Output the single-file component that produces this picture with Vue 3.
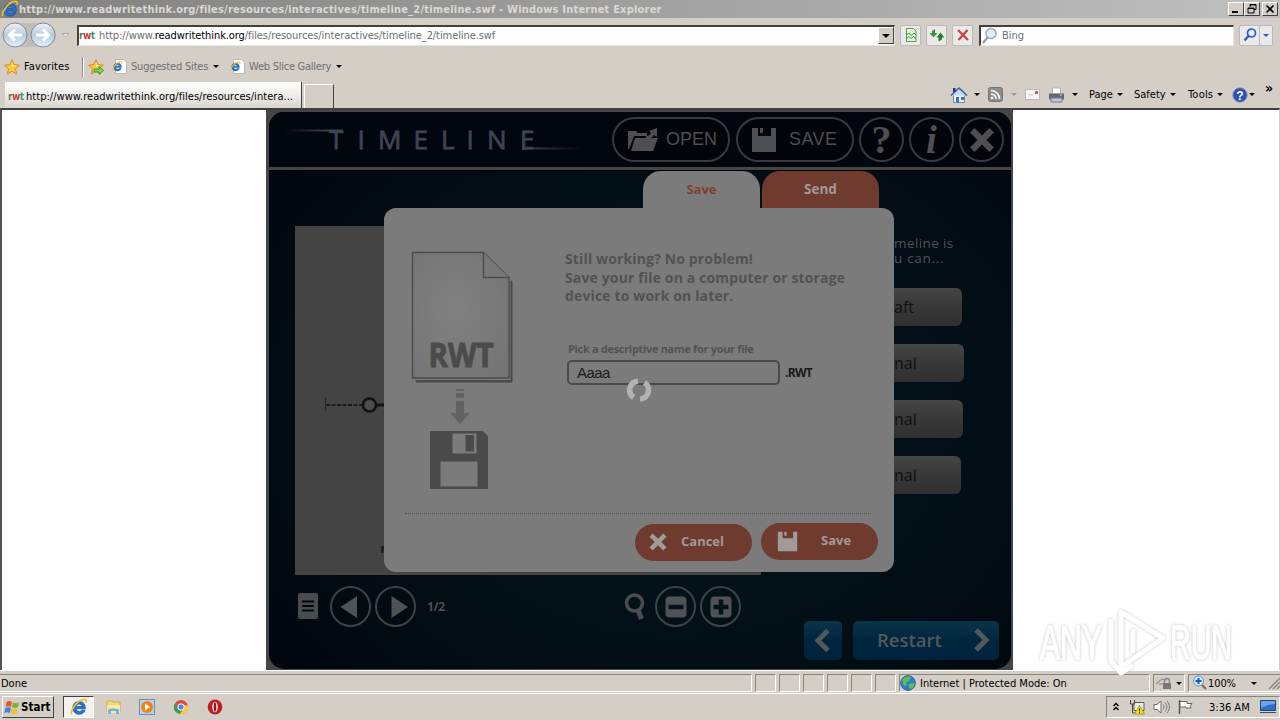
<template>
  <div class="screen">
    <svg class="sprite" aria-hidden="true">
      <symbol id="ie" viewBox="0 0 16 16">
        <path d="M13.6 9.6H5.4c.2 1.6 1.4 2.4 2.9 2.4 1.1 0 1.9-.4 2.4-1.2h2.7c-.8 2.3-2.8 3.6-5.2 3.6-3.400 0-5.700-2.300-5.700-5.700S4.900 3 8.200 3s5.600 2.400 5.400 6.600zM5.500 7.500h5.100C10.400 6.200 9.400 5.400 8.100 5.400S5.800 6.200 5.500 7.500z" fill="#2476d2" stroke="#0d4696" stroke-width=".6" />
        <path d="M1.500 14.600C-.2 11.500 5.500 3.200 11 1.400c3-.9 4.200.5 3.100 3" fill="none" stroke="#f0bf2d" stroke-width="1.500" />
      </symbol>
      <symbol id="star" viewBox="0 0 16 16">
        <path d="M8 .8l2.200 4.800 5.200.6-3.900 3.500 1.100 5.200L8 12.300l-4.600 2.600 1.100-5.200L.6 6.200l5.200-.6z" fill="#fdc741" stroke="#d98a16" stroke-width="1" />
        <path d="M8 3l1.300 3.300 3 .4L8 8z" fill="#fff0a8" />
      </symbol>
      <symbol id="floppy" viewBox="0 0 26 26">
        <path d="M1 1h6v8h13V1h5v24H1zM9 1h3v5H9z" />
      </symbol>
      <symbol id="cross" viewBox="0 0 26 26">
        <path d="M4 4l18 18M22 4L4 22" fill="none" stroke="currentColor" stroke-width="6" />
      </symbol>
    </svg>

    <header class="titlebar">
      <svg class="i18"><use href="#ie" /></svg>
      <span class="title">http://www.readwritethink.org/files/resources/interactives/timeline_2/timeline.swf - Windows Internet Explorer</span>
      <div class="winbtns">
        <button><svg width="14" height="12"><path d="M3 9h6" stroke="#000" stroke-width="2" /></svg></button>
        <button><svg width="14" height="12"><path d="M5 4V1.500h6v5H9M5 2h6M3 5h6v5H3zM3 5.500h6" fill="none" stroke="#000" /></svg></button>
        <button class="close"><svg width="14" height="12"><path d="M3.500 2.500l7 7M10.500 2.500l-7 7" stroke="#000" stroke-width="1.700" /></svg></button>
      </div>
    </header>

    <div class="address-row">
      <svg class="navbtns" width="76" height="30">
        <defs>
          <linearGradient id="nb" x1="0" y1="0" x2="0" y2="1">
            <stop offset="0" stop-color="#eef3f8" /><stop offset=".5" stop-color="#b9cbdd" /><stop offset="1" stop-color="#e4f2fb" />
          </linearGradient>
        </defs>
        <path d="M15 3h29a12 12 0 0 1 0 24H15a12 12 0 0 1 0-24z" fill="#b6b2ac" opacity=".6" />
        <circle cx="15" cy="15" r="12" fill="url(#nb)" stroke="#7c8ca0" />
        <circle cx="43" cy="15" r="12" fill="url(#nb)" stroke="#7c8ca0" />
        <path d="M22 15H10M15 9.500L9.500 15l5.500 5.500M36 15h12M43 9.500l5.500 5.500-5.500 5.500" fill="none" stroke="#fff" stroke-width="3" />
        <path d="M62 13.500h7l-3.500 4z" fill="#e8e5e0" stroke="#aaa6a0" />
      </svg>
      <div class="field url">
        <span class="rwt"><b>r</b><i>w</i><u>t</u></span>
        <span class="url-text">http://www.<em>readwritethink.org</em>/files/resources/interactives/timeline_2/timeline.swf</span>
        <button class="drop"><span class="caret"></span></button>
      </div>
      <div class="flatbtns">
        <button><svg width="16" height="16"><path d="M3.500 1.500h7l2.500 2.500v10.500h-9.500z" fill="#e4f5df" stroke="#55a050" /><path d="M3.500 8l2.500-2 2 2.500L11 6l2 2M3.500 11.500l2.500-2 2 2 2.500-2 2.500 2" fill="none" stroke="#3f9a3c" /></svg></button>
        <button><svg width="16" height="16"><path d="M6 2v4h2.500L4.500 10.500.5 6H3V4z" fill="#37963a" /><path d="M9.500 14.500v-4H7.500L11.500 5.500l4 5H13v2z" fill="#2b7f2d" /></svg></button>
        <button><svg width="16" height="16"><path d="M3 3l10 10M12.500 3L3.500 13" fill="none" stroke="#c9423c" stroke-width="2.200" /></svg></button>
      </div>
      <div class="field search">
        <svg width="18" height="18"><circle cx="10" cy="6.500" r="5" fill="#e2eef7" stroke="#98a9b8" stroke-width="1.400" /><path d="M6.500 10.500L2 16" stroke="#8e9aa6" stroke-width="2" /></svg>
        <span>Bing</span>
      </div>
      <div class="flatbtns go">
        <button><svg width="16" height="16"><circle cx="9.500" cy="6" r="4" fill="#e3effc" stroke="#2559cf" stroke-width="1.700" /><path d="M6.500 9L2.500 13.500" stroke="#2559cf" stroke-width="2.200" /></svg></button>
        <button class="narrow"><span class="caret navy"></span></button>
      </div>
    </div>

    <div class="fav-row">
      <svg class="i16"><use href="#star" /></svg>
      <span class="fav">Favorites</span>
      <span class="sep"></span>
      <svg class="i16 addfav" viewBox="0 0 16 16"><use href="#star" /><path d="M6 10h5V7.500l4.500 4-4.500 4V13H6z" fill="#7dd35c" stroke="#2f8f24" stroke-width=".8" /></svg>
      <svg class="i15 page" viewBox="0 0 15 15"><path d="M3.500.5h8l3 3v11h-11z" fill="#fff" stroke="#b9b9b9" /><use href="#ie" x="0" y="2" width="11" height="11" /></svg>
      <span class="dim sug">Suggested Sites</span><span class="caret"></span>
      <svg class="i15 page2" viewBox="0 0 15 15"><path d="M3.500.5h8l3 3v11h-11z" fill="#fff" stroke="#b9b9b9" /><use href="#ie" x="0" y="2" width="11" height="11" /></svg>
      <span class="dim wsg">Web Slice Gallery</span><span class="caret"></span>
    </div>

    <div class="tab-row">
      <div class="tab">
        <span class="rwt"><b>r</b><i>w</i><u>t</u></span>
        <span>http://www.readwritethink.org/files/resources/intera...</span>
      </div>
      <div class="newtab"></div>
      <div class="commands">
        <svg width="18" height="18"><path d="M3.500 8.500h11v8h-11z" fill="#e9eef8" stroke="#7689ae" /><path d="M1 9.500L9 2l8 7.500" fill="#c9d7ef" stroke="#3a58a4" stroke-width="1.500" /><path d="M3 2h2.500v4H3z" fill="#27357d" /><path d="M6 11h3v5.500H6zM11 11h3v3h-3z" fill="#3b74b9" /></svg>
        <span class="caret c1"></span>
        <svg class="rss" width="15" height="15"><rect x=".5" y=".5" width="14" height="14" rx="2" fill="#8d8d8d" stroke="#757575" /><path d="M3 7a5 5 0 0 1 5 5M3 3.500A8.500 8.500 0 0 1 11.500 12" fill="none" stroke="#fff" stroke-width="1.700" /><circle cx="4" cy="11" r="1.300" fill="#fff" /></svg>
        <span class="caret pale c2"></span>
        <svg class="mail" width="15" height="11"><path d="M.5.5h14v10H.5z" fill="#f6f6f6" stroke="#bcb9b5" /><path d="M10 2h3v3h-3z" fill="#d0556c" /><path d="M3 6h5" stroke="#c9c9c9" /></svg>
        <svg class="print" width="17" height="16"><path d="M4.500 1h7l1 1v5h-8z" fill="#fff" stroke="#b7b7b7" /><path d="M1 6.500h15v6H1z" fill="#666b73" /><path d="M3 11h11v4H3z" fill="#b5c9dd" stroke="#737b85" /><path d="M12 8h2" stroke="#cfd4da" /></svg>
        <span class="caret c3"></span>
        <span class="cmd c4">Page</span><span class="caret"></span>
        <span class="cmd c6">Safety</span><span class="caret"></span>
        <span class="cmd c7">Tools</span><span class="caret"></span>
        <svg class="help" width="16" height="16"><circle cx="8" cy="8" r="7.200" fill="#2a52b4" stroke="#8793b5" /><text x="8" y="12.500" text-anchor="middle">?</text></svg>
        <span class="caret c8"></span>
        <span class="more">»</span>
      </div>
    </div>

    <main class="viewport">
      <div class="stage">
        <div class="panel">
          <div class="flash-head">
            <svg class="logo" width="310" height="44">
              <defs>
                <linearGradient id="sl"><stop offset="0" stop-color="#3d4452" stop-opacity="0" /><stop offset=".8" stop-color="#3d4452" /></linearGradient>
                <linearGradient id="sr"><stop offset="0" stop-color="#3d4452" /><stop offset="1" stop-color="#3d4452" stop-opacity="0" /></linearGradient>
              </defs>
              <text y="31" x="51 79.500 100 135.500 163 188.500 209 242">TIMELINE</text>
              <rect x="5" y="11.500" width="60" height="2" fill="url(#sl)" />
              <rect x="244" y="29.500" width="60" height="2" fill="url(#sr)" />
            </svg>
            <button class="pill open">
              <svg width="32" height="26"><path d="M1 4h8l2 2h9v3H7L2 22H1zM8 11h23l-5 13H4z" /><path d="M19 9c2 0 4-1 5-3l-2-2 8-3 0 9-3-2c-2 3-5 4-8 4z" /></svg>
              <span>OPEN</span>
            </button>
            <button class="pill save">
              <svg width="26" height="26"><use href="#floppy" /></svg>
              <span>SAVE</span>
            </button>
            <button class="round q">?</button>
            <button class="round info">i</button>
            <button class="round"><svg width="28" height="28"><use href="#cross" /></svg></button>
          </div>

          <div class="flash-body">
            <div class="left">
              <div class="canvas">
                <svg width="90" height="349">
                  <path d="M30.500 172v13" stroke="#262626" />
                  <path d="M31 179h36" stroke="#1c1c1c" stroke-width="2" stroke-dasharray="4 1.500" />
                  <circle cx="74.500" cy="179" r="6.500" fill="#4c4c4c" stroke="#101114" stroke-width="2.600" />
                  <path d="M81 179h9" stroke="#101114" stroke-width="3" />
                  <text x="85" y="327">r</text>
                </svg>
              </div>
              <div class="controls">
                <svg class="doc" width="20" height="27"><rect width="20" height="26" rx="2.500" fill="#494c4e" /><path d="M4 8.500h12M4 13h12M4 17.500h12" stroke="#03080f" stroke-width="2" /></svg>
                <button class="ctl"><svg width="38" height="38"><path d="M8.500 19L25 8v22z" /></svg></button>
                <button class="ctl"><svg width="38" height="38"><path d="M31 19L14.500 8v22z" /></svg></button>
                <span class="count">1/2</span>
                <svg class="lens" width="22" height="30"><circle cx="10.500" cy="11" r="8" fill="none" stroke="#4a4d4f" stroke-width="3.500" /><path d="M14 18l3.500 9" stroke="#4a4d4f" stroke-width="5" /></svg>
                <button class="ctl"><svg width="38" height="38"><rect x="8.500" y="8.500" width="21" height="21" rx="4" /><path d="M11.500 19h15" stroke="#04121a" stroke-width="4.500" /></svg></button>
                <button class="ctl"><svg width="38" height="38"><rect x="8.500" y="8.500" width="21" height="21" rx="4" /><path d="M11.500 19h15M19 11.500v15" stroke="#04121a" stroke-width="4.500" /></svg></button>
              </div>
            </div>

            <div class="right">
              <div class="done">
                <p>meline is</p>
                <p>u can...</p>
              </div>
              <button v-for="(b, i) in drafts" :key="i" class="gray" :style="{ width: b.width + 'px' }">{{ b.label }}</button>
              <div class="nav">
                <button class="blue back"><svg width="22" height="26"><path d="M16 2.500L6 12.500l10 10" /></svg></button>
                <button class="blue restart">Restart <svg width="22" height="26"><path d="M5 4l10 10L5 24" /></svg></button>
              </div>
            </div>
          </div>
        </div>

        <div class="dialog">
          <div class="dlg-tabs">
            <div class="dlg-tab on">Save</div>
            <div class="dlg-tab">Send</div>
          </div>
          <div class="dlg-body">
            <div class="dlg-main">
              <svg class="art" width="104" height="244">
                <defs>
                  <radialGradient id="sheet" cx=".45" cy=".45" r=".7"><stop offset="0" stop-color="#818181" /><stop offset="1" stop-color="#747474" /></radialGradient>
                </defs>
                <path d="M5 129.500h95V30h1l0 101H5z" fill="#4b4b4b" stroke="#4b4b4b" />
                <path d="M1.500 1.500h71l25.500 25v100.500H1.500z" fill="url(#sheet)" stroke="#4b4b4b" stroke-width="1.400" />
                <path d="M72.500 1.500v25h25.500" fill="#787878" stroke="#4b4b4b" stroke-width="1.400" />
                <text x="17.500" y="115.500" textLength="65" lengthAdjust="spacingAndGlyphs">RWT</text>
                <path d="M45 138h8v2h-8zM45 142h8v5h-8zM45 150h8v12h6l-10 11-10-11h6z" fill="#626262" />
                <path d="M19 180h53l5 5v53H19z" fill="#4a4a4a" />
                <path d="M41.500 182.500h24v20h-24zM29.500 210.500h37v25h-37z" fill="#7b7b7b" />
                <path d="M54.500 184h8.500v16.500h-8.500z" fill="#4a4a4a" />
              </svg>
              <div class="form">
                <p class="msg">Still working? No problem!<br>Save your file on a computer or storage<br>device to work on later.</p>
                <label>Pick a descriptive name for your file</label>
                <div class="name-row">
                  <div class="name">{{ fileName }}</div>
                  <span class="ext">.RWT</span>
                </div>
              </div>
            </div>
            <div class="actions">
              <button class="orange"><svg width="20" height="20"><use href="#cross" /></svg><span>Cancel</span></button>
              <button class="orange sv"><svg width="21" height="21"><use href="#floppy" /></svg><span>Save</span></button>
            </div>
          </div>
        </div>

        <svg class="spinner" width="26" height="26">
          <path d="M7.500 20.500A9 9 0 0 1 12 4.200M18.500 5.500A9 9 0 0 1 14 22" />
        </svg>
      </div>

      <svg class="watermark" width="204" height="70" viewBox="0 0 204 70">
        <text x="3" y="52" textLength="62" lengthAdjust="spacingAndGlyphs">ANY</text>
        <text x="133" y="52" textLength="62" lengthAdjust="spacingAndGlyphs">RUN</text>
        <path d="M84 5l42 26-42 29zM74 12v42l10 12 12-8M96 22v24" />
      </svg>
    </main>

    <footer class="status">
      <div class="cell grow">Done</div>
      <div v-for="n in 6" :key="n" class="cell small"></div>
      <div class="cell zone">
        <svg width="16" height="16"><circle cx="8" cy="8" r="7.300" fill="#2d7fd0" stroke="#2a5a94" /><path d="M2 5c2-4 7-4 9-3L9 6 6 7l1 3-3 1zM9 9l4-1 2 1-3 5-3-1z" fill="#5fbf4b" /></svg>
        <span>Internet | Protected Mode: On</span>
      </div>
      <div class="cell lock">
        <svg width="18" height="16"><path d="M1 9l6-5 4 1M4 9h4" fill="none" stroke="#9c9c9c" stroke-width="1.500" /><path d="M8 8h8v6H8z" fill="#787878" /><path d="M9.500 8V6a2.500 2.500 0 0 1 5 0v2" fill="none" stroke="#858585" stroke-width="1.400" /></svg>
        <span class="caret"></span>
      </div>
      <div class="cell zoom">
        <svg width="16" height="16"><circle cx="6.500" cy="6" r="5" fill="#d5e9fb" stroke="#5d96d3" /><path d="M3.500 6h6M6.500 3v6" stroke="#1c58bd" stroke-width="2" /><path d="M10 10l4 4" stroke="#8c6a4c" stroke-width="2.300" /></svg>
        <span class="pct">100%</span><span class="caret"></span>
        <svg class="grip" width="12" height="12"><path d="M1 12L12 1M5 12l7-7M9 12l3-3" stroke="#8b8781" stroke-width="1.500" /></svg>
      </div>
    </footer>

    <div class="taskbar">
      <button class="start">
        <svg width="17" height="16"><path d="M2.500 3C4.500 1.500 6.500 2 8 3L7 8C5 7 3.500 7 1.500 8z" fill="#e8582c" /><path d="M9 3.500c2 1 4 1 6-.3l-1 5c-2 1-4 1-6 0z" fill="#73b73a" /><path d="M1.300 9c2-1.200 3.700-1 5.500 0l-1 5C4 13 2.300 13 .3 14z" fill="#3b86d8" /><path d="M7.700 9.500c2 1 4 1 6-.3l-1 5c-2 1-4 1-6 0z" fill="#f4bd2c" /></svg>
        <span>Start</span>
      </button>
      <div class="task active"><svg class="i18"><use href="#ie" /></svg></div>
      <svg class="launch l1" width="17" height="16"><path d="M2 2h5l1 1h7v10H2z" fill="#f0d778" stroke="#d2ad43" /><path d="M2 6h13v8H2z" fill="#f8eaa5" /><path d="M3 15v-4c0-2 11-2 11 0v4h-3v-3H6v3z" fill="#6db4e4" /></svg>
      <svg class="launch l2" width="16" height="16"><rect x=".5" y=".5" width="15" height="15" fill="#b8d3ea" stroke="#5e93c4" /><circle cx="8" cy="8" r="6" fill="#f08217" /><path d="M6 4.500L11 8l-5 3.500z" fill="#fff" /></svg>
      <svg class="launch l3" width="16" height="16"><circle cx="8" cy="8" r="7" fill="#e14b3b" /><path d="M1.500 5A7 7 0 0 0 7 15l3-6H5z" fill="#35a452" /><path d="M15 6.500A7 7 0 0 1 7 15l4-6-1-3z" fill="#f8cc3d" /><circle cx="8" cy="8" r="3.200" fill="#4a86e8" stroke="#fff" /></svg>
      <svg class="launch l4" width="16" height="16"><ellipse cx="8" cy="8" rx="7.300" ry="7.500" fill="#c01c20" /><ellipse cx="8" cy="8" rx="2.800" ry="5.300" fill="#e9e2de" /><ellipse cx="8" cy="8" rx="1.200" ry="4.800" fill="#9c1216" /></svg>
      <div class="tray">
        <svg class="t1" width="9" height="12"><path d="M1.500 5L4 2.500 6.500 5M1.500 9L4 6.500 6.500 9" fill="none" stroke="#000" stroke-width="1.400" /></svg>
        <svg class="t2" width="17" height="16"><path d="M5 3.500h10v8H5z" fill="#e9e9e9" stroke="#5b5b5b" /><path d="M1.500 1v4h4V1M3.500 5v9h4" fill="none" stroke="#444" /><path d="M10.500 6.500l5 8.500h-10z" fill="#f8df22" stroke="#b89b0c" /><path d="M10.500 9.500v3M10.500 13.200v1" stroke="#222" /></svg>
        <svg class="t3" width="17" height="16"><path d="M1 5.500h3L8 2v12l-4-3.500H1z" fill="#fdfdfd" stroke="#6d6d6d" /><path d="M10 5.500c1.300 1.500 1.300 3.500 0 5M12 3.500c2.500 3 2.500 6 0 9M14 2c3.200 4 3.200 8 0 12" fill="none" stroke="#7b7b7b" /></svg>
        <svg class="t4" width="17" height="16"><path d="M2.500 1v14" stroke="#555" stroke-width="1.500" /><path d="M3 2.500h7v2h5l-2 3 1 1.500H9V8H3z" fill="#fff" stroke="#666" /></svg>
        <span class="clock">3:36 AM</span>
        <svg class="t5" width="16" height="14"><path d="M.5.500h15v10H.5z" fill="#2c6fc5" stroke="#1d4380" /><path d="M1 1h14v3C9 4 5 6 1 8z" fill="#6aa5e6" /><path d="M0 12h16v1H0z" fill="#404a5a" /></svg>
      </div>
    </div>
  </div>
</template>

<script setup>
import { ref } from 'vue'

const fileName = ref('Aaaa')

const drafts = [
  { label: 'aft', width: 102 },
  { label: 'nal', width: 104 },
  { label: 'nal', width: 103 },
  { label: 'nal', width: 101 }
]
</script>

<style>
body { margin: 0; overflow: hidden; }
</style>

<style scoped>
* { box-sizing: border-box; }

.screen {
  width: 1280px;
  height: 720px;
  display: flex;
  flex-direction: column;
  background: #d4cec7;
  font-family: "DejaVu Sans Condensed", "DejaVu Sans", sans-serif;
  font-size: 11px;
  color: #000;
  white-space: nowrap;
  overflow: hidden;
}

.sprite { display: none; }
svg { display: block; flex: none; }
p { margin: 0; }
button {
  font: inherit;
  color: inherit;
  padding: 0;
  margin: 0;
  border: 0;
  background: none;
  display: flex;
  align-items: center;
}

.i18 { width: 18px; height: 18px; }
.i16 { width: 16px; height: 16px; }
.i15 { width: 15px; height: 15px; }

.caret {
  flex: none;
  width: 0;
  height: 0;
  border: 3px solid transparent;
  border-top-color: #000;
  border-bottom: 0;
}
.caret.navy { border-top-color: #2559cf; }
.caret.pale { border-top-color: #9b9690; }

.titlebar {
  height: 18px;
  display: flex;
  align-items: center;
  background: linear-gradient(90deg, #808080, #c0c0c0);
  padding-left: 1px;
}
.title {
  flex: 1;
  font-weight: bold;
  color: #dcd8d2;
  letter-spacing: 0.2px;
}
.winbtns { display: flex; padding-right: 2px; }
.winbtns button, .drop {
  width: 16px;
  height: 14px;
  background: #d4cec7;
  border: 1px solid;
  border-color: #fff #404040 #404040 #fff;
}
.winbtns .close { margin-left: 2px; }

.address-row {
  height: 34px;
  display: flex;
  align-items: center;
}
.field {
  height: 21px;
  margin-left: 1px;
  background: #fff;
  border: 1px solid;
  border-color: #404040 #e8e4de #e8e4de #404040;
  border-top-width: 2px;
  border-left-width: 2px;
  display: flex;
  align-items: center;
}
.url { width: 818px; color: #6e6e6e; }
.url-text { flex: 1; margin-left: 4px; letter-spacing: -0.08px; }
.url-text em { font-style: normal; color: #000; }
.drop { height: 17px; justify-content: center; }
.drop .caret { border-width: 4px 4px 0; }
.rwt {
  flex: none;
  width: 16px;
  font-weight: bold;
  font-size: 10px;
  letter-spacing: -0.5px;
}
.rwt b { color: #5d7a6d; }
.rwt i { color: #d03a35; font-style: normal; }
.rwt u { color: #2f9a7c; text-decoration: none; }

.flatbtns { display: flex; gap: 5px; margin-left: 5px; }
.flatbtns button {
  width: 21px;
  height: 21px;
  justify-content: center;
  background: #ece9e6;
  border: 1px solid #b4bac4;
  border-radius: 2px;
}
.search { width: 255px; margin-left: 6px; color: #6e6e6e; }
.search span { margin-left: 3px; }
.go { gap: 0; }
.flatbtns .narrow { width: 14px; margin-left: -1px; }

.fav-row {
  height: 29px;
  display: flex;
  align-items: center;
  padding-left: 4px;
}
.fav { width: 58px; margin-left: 4px; letter-spacing: 0.1px; }
.sep { width: 2px; height: 20px; border-left: 1px solid #8f8b86; border-right: 1px solid #fff; margin-right: 4px; }
.page { margin-left: 8px; }
.dim { color: #6e6e6e; }
.sug { width: 82px; margin-left: 4px; letter-spacing: -0.18px; }
.page2 { margin-left: 11px; }
.wsg { width: 87px; margin-left: 4px; letter-spacing: -0.25px; }

.tab-row {
  height: 27px;
  display: flex;
  align-items: flex-end;
}
.tab {
  width: 297px;
  height: 26px;
  margin-left: 5px;
  padding: 2px 0 0 3px;
  display: flex;
  align-items: center;
  background: linear-gradient(#fff, #efece8 50%, #d9d4ce);
  border-right: 1px solid #404040;
  letter-spacing: 0.04px;
}
.tab .rwt { margin-right: 2px; }
.newtab {
  width: 30px;
  height: 24px;
  margin-left: 2px;
  border: 1px solid #fff;
  border-right-color: #404040;
  border-bottom: 0;
}
.commands {
  flex: 1;
  height: 27px;
  display: flex;
  align-items: center;
  padding-left: 616px;
}
.c1 { margin-left: 6px; }
.rss { margin-left: 8px; }
.c2 { margin-left: 8px; }
.mail { margin-left: 8px; }
.print { margin-left: 8px; }
.c3 { margin-left: 7px; }
.c4 { width: 28px; margin-left: 11px; }
.c6 { width: 36px; margin-left: 11px; }
.c7 { width: 29px; margin-left: 12px; letter-spacing: 0.2px; }
.help { margin-left: 9px; }
.help text { font: bold 12px "Liberation Sans", sans-serif; fill: #fff; }
.c8 { margin-left: 1px; }
.more { margin: -14px 0 0 10px; font-size: 14px; font-weight: bold; }

.viewport {
  position: relative;
  height: 562px;
  background: #fff;
  border-top: 2px solid #404040;
  border-left: 2px solid #565350;
  border-right: 1px solid #d4cec7;
}
.stage {
  position: relative;
  width: 747px;
  height: 560px;
  margin-left: 264px;
  padding: 2px 2px 1px 3px;
  background: #454545;
}
.panel {
  height: 557px;
  border-radius: 15px;
  background: radial-gradient(ellipse 70% 75% at 55% 55%, #03161d, #031118 45%, #02060e 100%);
  overflow: hidden;
}
.flash-head {
  height: 58px;
  display: flex;
  align-items: center;
  padding-left: 9px;
  background: #02060f;
  border-bottom: 3px solid #454545;
}
.logo text { font: 26px "Open Sans", sans-serif; fill: #3d4452; stroke: #3d4452; stroke-width: 0.8; }
.flash-head button {
  height: 45px;
  border: 2px solid #373b3f;
  border-radius: 23px;
  color: #4d4f52;
  fill: #4d4f52;
  background: #01040a;
}
.flash-head .pill { width: 118px; font: 18px "Liberation Sans", sans-serif; }
.flash-head .open { margin-left: 24px; padding-left: 13px; }
.open span { margin-left: 7px; }
.flash-head .save { margin-left: 6px; padding-left: 13px; }
.flash-head .save span { margin-left: 12px; letter-spacing: 0.4px; }
.flash-head .round { width: 45px; margin-left: 5px; justify-content: center; }
.flash-head .q { font: bold 40px "Liberation Serif", serif; }
.flash-head .info { font: italic bold 39px "Liberation Serif", serif; }

.flash-body { display: flex; height: 499px; border-top: 1px solid #000; }
.left { width: 492px; padding: 55px 0 0 26px; }
.canvas { width: 466px; height: 349px; background: #444; }
.canvas text { font: bold 13px "DejaVu Sans", sans-serif; fill: #181818; }
.controls { display: flex; align-items: center; margin-top: 11px; height: 41px; padding-left: 3px; }
.ctl {
  width: 41px;
  height: 41px;
  border: 2px solid #3d4346;
  border-radius: 50%;
  fill: #505355;
  justify-content: center;
}
.doc { margin-right: 12px; }
.ctl + .ctl { margin-left: 4px; }
.count { width: 197px; margin-left: 11px; font: bold 12px "Open Sans", sans-serif; letter-spacing: -0.3px; color: #4b5052; }
.lens { margin-right: 9px; }

.right { width: 250px; display: flex; flex-direction: column; padding: 65px 0 0 99px; }
.done {
  height: 52px;
  padding-left: 34px;
  font: 13.500px/15px "Open Sans", sans-serif;
  letter-spacing: 0.4px;
  color: #4e5356;
}
.done p + p { letter-spacing: 0.7px; }
.gray {
  height: 38px;
  margin-bottom: 18px;
  padding: 0 0 1px 34px;
  border-radius: 6px;
  background: linear-gradient(#464646, #383838 50%, #303030);
  color: #101010;
  font: 500 16px "Open Sans", sans-serif;
}
.nav { display: flex; gap: 11px; margin: 109px 0 0 -56px; }
.blue {
  height: 39px;
  border-radius: 5px;
  background: linear-gradient(#0a3348, #00263f 50%, #00233d);
  color: #53585b;
}
.blue path { fill: none; stroke: #53585b; stroke-width: 5; }
.back { width: 38px; justify-content: center; }
.restart {
  width: 146px;
  padding: 0 6px 3px 24px;
  justify-content: space-between;
  font: 600 18.500px "Open Sans", sans-serif;
}

/* save dialog above the dimmed stage */
.dialog {
  position: absolute;
  left: 118px;
  top: 61px;
  width: 510px;
  font-family: "Open Sans", sans-serif;
}
.dlg-tabs { display: flex; gap: 2px; padding-left: 259px; }
.dlg-tab {
  width: 117px;
  height: 37px;
  border-radius: 18px 18px 0 0;
  background: #6e3b2e;
  color: #a09a98;
  font-weight: bold;
  font-size: 13.500px;
  line-height: 36px;
  text-align: center;
}
.dlg-tab.on { background: #7b7b7b; color: #823f31; font-size: 13px; }
.dlg-body { height: 364px; background: #7b7b7b; border-radius: 12px; }
.dlg-main {
  display: flex;
  height: 306px;
  margin: 0 23px 0 21px;
  padding: 42px 0 0 5px;
  border-bottom: 1px dotted #4c4c4c;
}
.art { margin: 1px 0 0 1px; }
.art text { font: bold 34px "Open Sans", sans-serif; fill: #4b4b4b; stroke: #4b4b4b; }
.form { margin-left: 50px; color: #525252; }
.msg { font: bold 14px/18.500px "Open Sans", sans-serif; letter-spacing: 0.14px; }
label { display: block; margin: 35px 0 0 3px; font: bold 11px/15px "Open Sans", sans-serif; letter-spacing: -0.32px; }
.name-row { display: flex; align-items: center; margin: 4px 0 0 2px; }
.name {
  width: 213px;
  height: 25px;
  padding-left: 8px;
  border: 2px solid #4a4a4a;
  border-radius: 5px;
  color: #1b1b1b;
  font: 15px/22px "Liberation Sans", sans-serif;
  letter-spacing: -0.6px;
}
.ext { margin-left: 5px; color: #1a1a1a; font-weight: bold; font-size: 12px; letter-spacing: -0.7px; }
.actions { display: flex; gap: 9px; padding: 9px 0 0 251px; }
.orange {
  width: 117px;
  height: 37px;
  margin-top: 1px;
  padding: 0 0 1px 13px;
  border-radius: 19px;
  background: #6e3b2e;
  color: #a09a98;
  fill: #a09a98;
  font-weight: bold;
  font-size: 13px;
}
.orange span { margin: -2px 0 0 13px; }
.orange.sv { margin-top: 0; padding-left: 16px; }
.sv span { margin-left: 23px; }

.spinner { position: absolute; left: 360px; top: 267px; }
.spinner path { fill: none; stroke: #b2b2b2; stroke-width: 5.500; }

.watermark { position: absolute; left: 1035px; top: 497px; filter: drop-shadow(0 0 1.500px #c4c4c4); }
.watermark text { font: 49px "Liberation Sans", sans-serif; fill: #fff; stroke: #fff; stroke-width: 1.500; }
.watermark path { fill: none; stroke: #fff; stroke-width: 5; stroke-linejoin: round; }

.status {
  height: 24px;
  display: flex;
  gap: 3px;
  padding: 3px 0 1px;
  border-top: 1px solid #fff;
  border-bottom: 1px solid #fff;
}
.cell {
  display: flex;
  align-items: center;
  border: 1px solid;
  border-color: #88847e #fff #fff #88847e;
}
.grow { width: 752px; border-left: 0; padding-left: 1px; }
.small { width: 21px; }
.zone { width: 251px; padding-left: 0; }
.zone span { margin-left: 4px; }
.lock { width: 32px; padding-left: 1px; }
.lock .caret { margin-left: 3px; }
.zoom { flex: 1; padding-left: 3px; border-right: 0; }
.pct { width: 43px; margin-left: 0; letter-spacing: -0.1px; }
.grip { margin-left: auto; }

.taskbar {
  flex: 1;
  display: flex;
  align-items: center;
  padding-left: 2px;
}
.start {
  width: 52px;
  height: 22px;
  padding-left: 1px;
  border: 1px solid;
  border-color: #fff #404040 #404040 #fff;
  font-weight: bold;
  font-size: 11.500px;
}
.task {
  width: 31px;
  height: 22px;
  margin-left: 9px;
  padding: 1px 0 0 6px;
  background: #f4f2ef;
  border: 1px solid;
  border-color: #404040 #fff #fff #404040;
}
.l1 { margin-left: 11px; }
.l2 { margin-left: 17px; }
.l3 { margin-left: 18px; }
.l4 { margin-left: 18px; }
.tray {
  width: 174px;
  height: 22px;
  margin-left: auto;
  padding-left: 5px;
  display: flex;
  align-items: center;
  border: 1px solid;
  border-color: #88847e #fff #fff #88847e;
}
.t2 { margin-left: 8px; }
.t3 { margin-left: 7px; }
.t4 { margin-left: 7px; }
.clock { width: 42px; margin-left: 15px; }
.t5 { margin-left: 9px; }
</style>
